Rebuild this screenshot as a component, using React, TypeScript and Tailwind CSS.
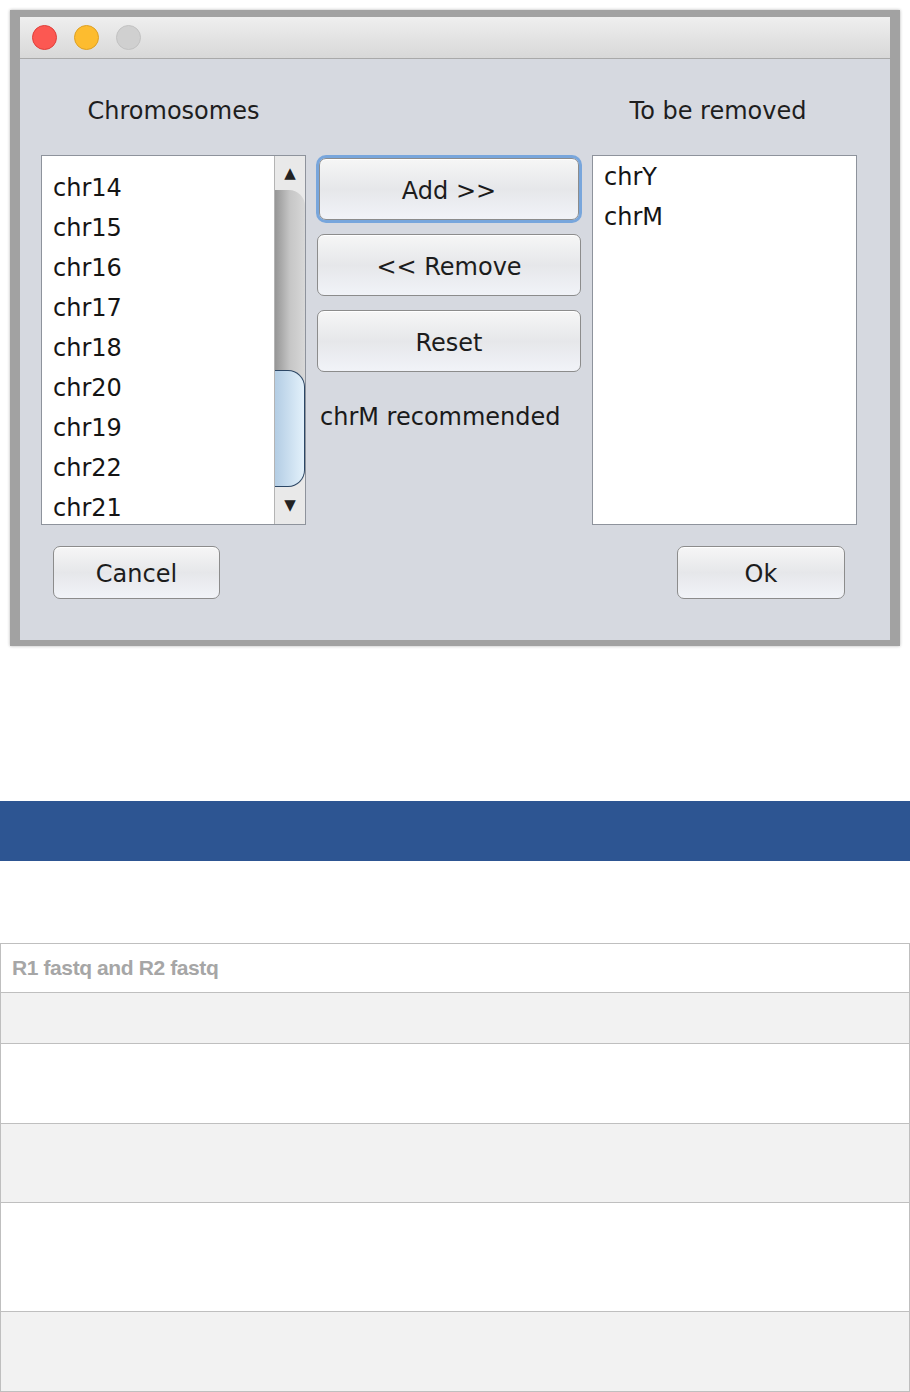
import React from "react";

const leftItems = ["chr13", "chr14", "chr15", "chr16", "chr17", "chr18", "chr20", "chr19", "chr22", "chr21"];
const rightItems = ["chrY", "chrM"];

// bordered rows under the blue band
const rows = [
  { h: "h-[49px]", bg: "bg-white", text: "R1 fastq and R2 fastq" },
  { h: "h-[51px]", bg: "bg-[#f2f2f2]", text: "" },
  { h: "h-[80px]", bg: "bg-white", text: "" },
  { h: "h-[79px]", bg: "bg-[#f2f2f2]", text: "" },
  { h: "h-[109px]", bg: "bg-white", text: "" },
  { h: "h-[80px]", bg: "bg-[#f2f2f2]", text: "" },
];

function MacButton({ label, focused, className }: { label: string; focused?: boolean; className?: string }) {
  return (
    <div
      className={`flex items-center justify-center rounded-[7px] border border-[#8c8c8c] bg-linear-to-b from-[#f6f6f6] via-[#e6e7ea] to-[#f1f3f8] text-[24px] text-[#1c1c1c] shadow-[inset_0_1px_0_#ffffff] ${
        focused ? "outline-[3px] outline-solid outline-[#78a6dc]" : ""
      } ${className ?? ""}`}
    >
      <span className="pt-[3px]">{label}</span>
    </div>
  );
}

function ScrollBar() {
  return (
    <div className="flex w-[31px] flex-col border-l border-[#b4b4b4] bg-[#e9e9e9]">
      <div className="flex h-[34px] items-center justify-center text-[15px] leading-none text-[#222]">▲</div>
      <div className="flex h-[297px] flex-col rounded-tr-[16px] rounded-br-[16px] bg-linear-to-r from-[#969696] via-[#c6c6c6] to-[#d8d8d8]">
        <div className="h-[180px]" />
        <div className="h-[117px] rounded-r-[17px] border-y-[1.5px] border-r-[1.5px] border-[#2d4765] bg-linear-to-r from-[#b3cde4] to-[#e3f1fb]" />
      </div>
      <div className="flex flex-1 items-center justify-center text-[15px] leading-none text-[#222]">▼</div>
    </div>
  );
}

export default function App() {
  return (
    <div className="w-[910px] min-h-[1392px] bg-white">
      {/* dialog window */}
      <div className="pt-[10px] pl-[10px]">
        <div className="w-[890px] bg-[#a2a2a2] pt-[7px] pb-[6px] px-[10px] shadow-[0_0_3px_#b5b5b5]">
          <div className="flex flex-col font-['DejaVu_Sans',sans-serif]">
            <div className="flex h-[42px] items-center gap-[17px] border-b border-[#a9a9a9] bg-linear-to-b from-[#efefef] to-[#d8d8d8] pl-[12px]">
              <div className="h-[25px] w-[25px] rounded-full border border-[#df3f3a] bg-[#fc5852]" />
              <div className="h-[25px] w-[25px] rounded-full border border-[#dda024] bg-[#fdbc2f]" />
              <div className="h-[25px] w-[25px] rounded-full border border-[#c2c2c2] bg-[#d0d0d0]" />
            </div>

            <div className="bg-[#d6d9e0] pt-[38px] pb-[41px]">
              <div className="grid grid-cols-[265px_266px_265px] gap-x-[10px] pl-[21px]">
                <div className="h-[29px] text-center text-[24px] leading-[29px] text-[#1e1e1e]">Chromosomes</div>
                <div />
                <div className="h-[29px] pr-[13px] text-center text-[24px] leading-[29px] text-[#1e1e1e]">To be removed</div>
              </div>

              <div className="mt-[29px] grid grid-cols-[265px_266px_265px] gap-x-[10px] pl-[21px]">
                {/* available list */}
                <div className="flex h-[370px] border border-[#8e939c] bg-white">
                  <div className="flex-1 overflow-hidden">
                    <div className="-mt-[28px] pl-[11px]">
                      {leftItems.map((c) => (
                        <div key={c} className="flex h-10 items-center text-[24px] text-[#141414]">
                          {c}
                        </div>
                      ))}
                    </div>
                  </div>
                  <ScrollBar />
                </div>

                {/* action buttons */}
                <div className="flex flex-col px-[1px] pt-[3px]">
                  <MacButton label="Add >>" focused className="h-[62px] mx-[2px]" />
                  <MacButton label="<< Remove" className="mt-[14px] h-[62px]" />
                  <MacButton label="Reset" className="mt-[14px] h-[62px]" />
                  <div className="mt-[31px] pl-[3px] text-[24px] leading-[28px] text-[#1a1a1a]">chrM recommended</div>
                </div>

                {/* removed list */}
                <div className="h-[370px] border border-[#8e939c] bg-white pt-[1px] pl-[11px]">
                  {rightItems.map((c) => (
                    <div key={c} className="flex h-10 items-center text-[24px] text-[#141414]">
                      {c}
                    </div>
                  ))}
                </div>
              </div>

              <div className="mt-[21px] flex justify-between pl-[33px] pr-[45px]">
                <MacButton label="Cancel" className="h-[53px] w-[167px]" />
                <MacButton label="Ok" className="h-[53px] w-[168px]" />
              </div>
            </div>
          </div>
        </div>
      </div>

      <div className="mt-[155px] h-[60px] bg-[#2d5592]" />

      <div className="mt-[82px] border-x border-t border-[#bfbfbf] font-['Liberation_Sans',Arial,sans-serif]">
        {rows.map((r, i) => (
          <div key={i} className={`${r.h} ${r.bg} flex items-center border-b border-[#bfbfbf] pl-[11px]`}>
            {r.text && <span className="text-[21px] font-bold tracking-[-0.4px] text-[#a6a6a6]">{r.text}</span>}
          </div>
        ))}
      </div>
    </div>
  );
}
